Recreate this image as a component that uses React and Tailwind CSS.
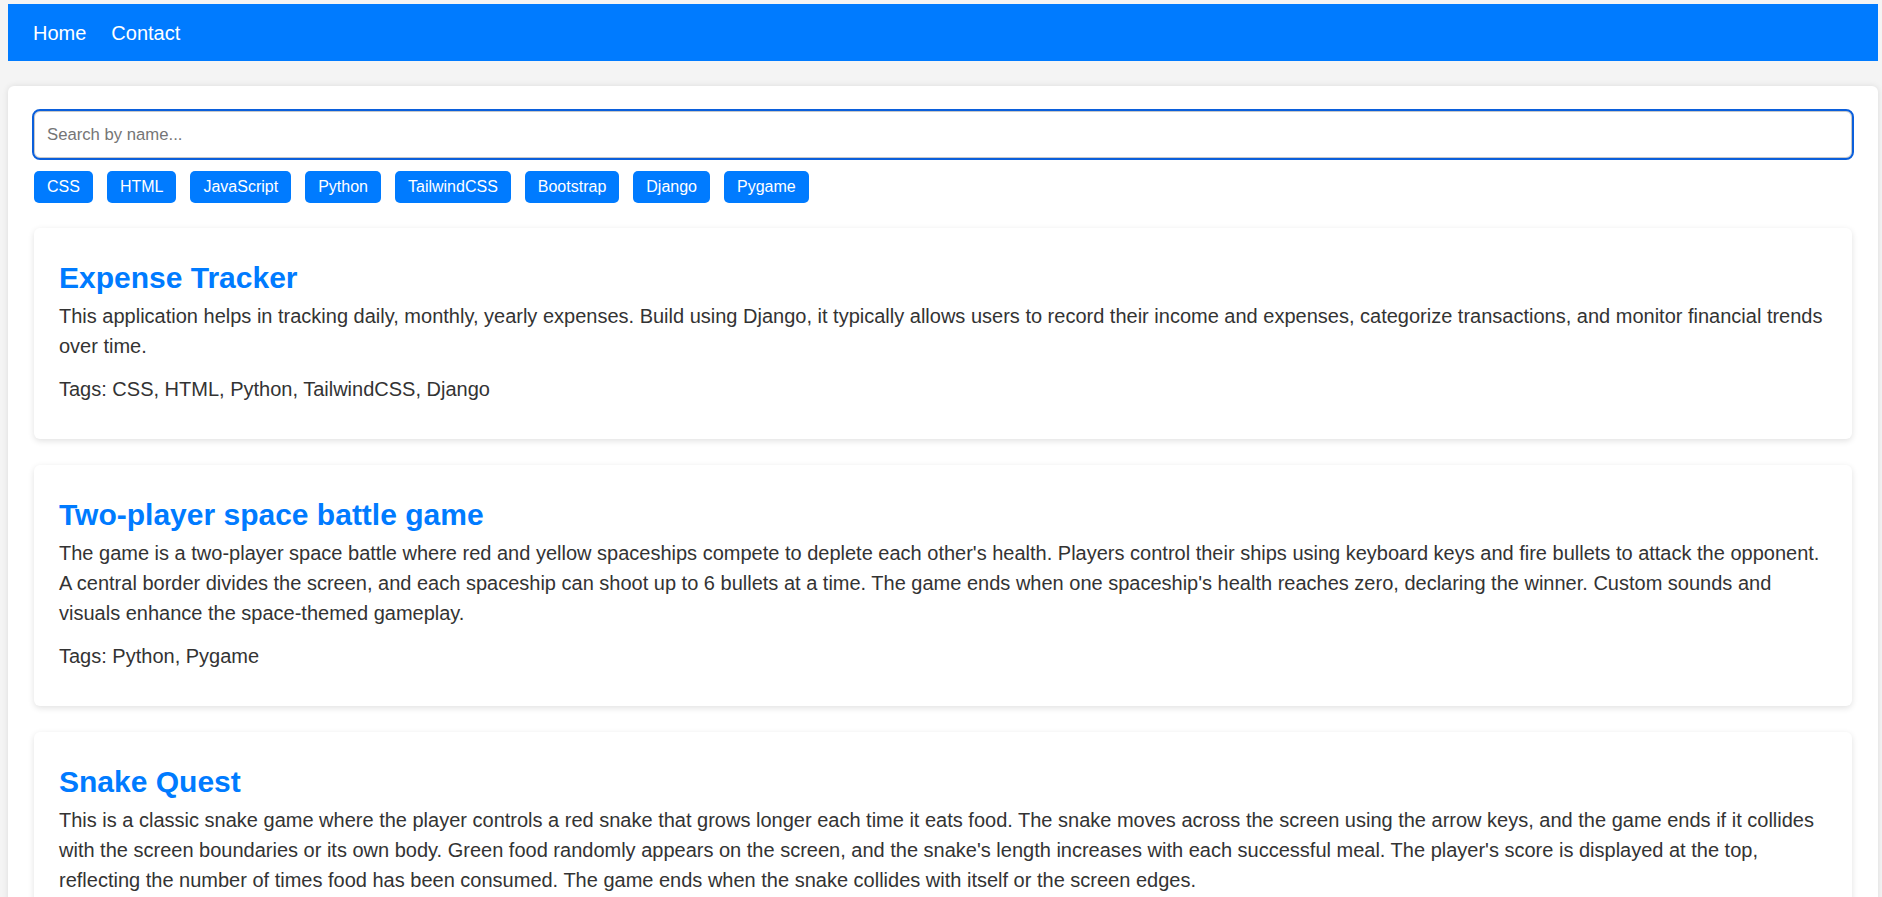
import { useState } from 'react';

const tags = ['CSS', 'HTML', 'JavaScript', 'Python', 'TailwindCSS', 'Bootstrap', 'Django', 'Pygame'];

const projects = [
  {
    title: 'Expense Tracker',
    description:
      'This application helps in tracking daily, monthly, yearly expenses. Build using Django, it typically allows users to record their income and expenses, categorize transactions, and monitor financial trends over time.',
    tags: ['CSS', 'HTML', 'Python', 'TailwindCSS', 'Django'],
  },
  {
    title: 'Two-player space battle game',
    description:
      "The game is a two-player space battle where red and yellow spaceships compete to deplete each other's health. Players control their ships using keyboard keys and fire bullets to attack the opponent. A central border divides the screen, and each spaceship can shoot up to 6 bullets at a time. The game ends when one spaceship's health reaches zero, declaring the winner. Custom sounds and visuals enhance the space-themed gameplay.",
    tags: ['Python', 'Pygame'],
  },
  {
    title: 'Snake Quest',
    description:
      "This is a classic snake game where the player controls a red snake that grows longer each time it eats food. The snake moves across the screen using the arrow keys, and the game ends if it collides with the screen boundaries or its own body. Green food randomly appears on the screen, and the snake's length increases with each successful meal. The player's score is displayed at the top, reflecting the number of times food has been consumed. The game ends when the snake collides with itself or the screen edges.",
    tags: ['Python', 'Pygame'],
  },
];

const App = () => {
  const [query, setQuery] = useState('');

  const shown = projects.filter((p) => p.title.toLowerCase().includes(query.toLowerCase()));

  return (
    <div className="min-h-screen bg-[#f4f4f4] pt-[4px] pl-[8px] pr-[4px] font-['Liberation_Sans',Arial,sans-serif] text-[#333]">
      {/* Navbar */}
      <nav className="h-[57px] bg-[#007bff] flex items-center pl-[25px] gap-[25px] text-white text-[20px]">
        <a href="#">Home</a>
        <a href="#">Contact</a>
      </nav>

      {/* Main */}
      <main className="mt-[25px] bg-white rounded-[6px] shadow-[0_0_6px_rgba(0,0,0,0.1)] px-[26px] pt-[25px] pb-[26px]">
        <input
          type="text"
          value={query}
          onChange={(e) => setQuery(e.target.value)}
          placeholder="Search by name..."
          className="block w-full h-[47px] px-[12px] border border-[#c8c8c8] rounded-[6px] outline-2 outline-[#0b5fdb] text-[16.7px] text-[#333] placeholder:text-[#757575] caret-black"
        />

        <div className="mt-[13px] flex gap-[14px]">
          {tags.map((t) => (
            <button
              key={t}
              className="h-[32px] px-[13px] rounded-[5px] bg-[#007bff] text-white text-[16px] leading-none"
            >
              {t}
            </button>
          ))}
        </div>

        <div className="mt-[25px] flex flex-col gap-[26px]">
          {shown.map((p) => (
            <div
              key={p.title}
              className="rounded-[6px] bg-white shadow-[0_2px_6px_rgba(0,0,0,0.12)] px-[25px] pt-[33px] pb-[35px]"
            >
              <h2 className="text-[30px] leading-[34px] font-bold text-[#007bff] mb-[6px]">{p.title}</h2>
              <p className="text-[20px] leading-[30px]">{p.description}</p>
              <p className="mt-[13px] text-[20px] leading-[30px]">Tags: {p.tags.join(', ')}</p>
            </div>
          ))}
        </div>
      </main>
    </div>
  );
};

export default App;
